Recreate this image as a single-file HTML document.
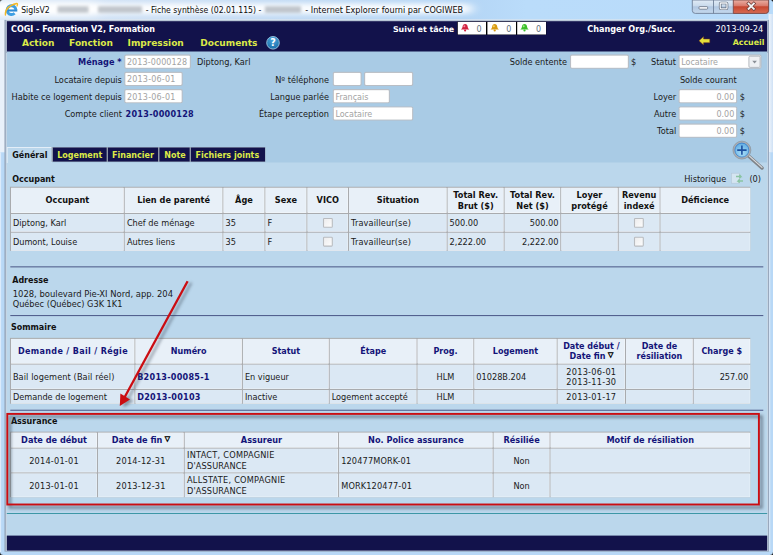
<!DOCTYPE html>
<html lang="fr">
<head>
<meta charset="utf-8">
<title>SigIsV2 - Fiche synthèse (02.01.115) - Internet Explorer fourni par COGIWEB</title>
<style>
html,body{margin:0;padding:0;background:#1b1b1b;width:773px;height:555px;overflow:hidden}
svg{display:block;position:absolute;left:0;top:0}
text{font-family:'DejaVu Sans','Liberation Sans',sans-serif;white-space:pre}
</style>
</head>
<body>
<svg width="773" height="555" viewBox="0 0 773 555">
<defs>
<linearGradient id="tb" x1="0" y1="0" x2="1" y2="0">
<stop offset="0" stop-color="#dbe8f7"/><stop offset="0.3" stop-color="#c6dcf4"/><stop offset="0.6" stop-color="#b4d5f5"/><stop offset="0.68" stop-color="#badcfa"/><stop offset="1" stop-color="#b8dbfa"/>
</linearGradient>
<linearGradient id="tbv" x1="0" y1="0" x2="0" y2="1">
<stop offset="0" stop-color="#ffffff" stop-opacity="0.55"/><stop offset="0.5" stop-color="#ffffff" stop-opacity="0.1"/><stop offset="1" stop-color="#ffffff" stop-opacity="0"/>
</linearGradient>
<linearGradient id="fl" x1="0" y1="0" x2="1" y2="0">
<stop offset="0" stop-color="#c9dcf0"/><stop offset="1" stop-color="#e3edf8"/>
</linearGradient>
<linearGradient id="fr" x1="0" y1="0" x2="1" y2="0">
<stop offset="0" stop-color="#f1f6fc"/><stop offset="1" stop-color="#cfe1f5"/>
</linearGradient>
<linearGradient id="btn" x1="0" y1="0" x2="0" y2="1">
<stop offset="0" stop-color="#e1ebf6"/><stop offset="0.45" stop-color="#c9daec"/><stop offset="0.5" stop-color="#b1c7e1"/><stop offset="1" stop-color="#c6d9ee"/>
</linearGradient>
<linearGradient id="cls" x1="0" y1="0" x2="0" y2="1">
<stop offset="0" stop-color="#eab0a4"/><stop offset="0.45" stop-color="#d8786a"/><stop offset="0.5" stop-color="#c6452f"/><stop offset="1" stop-color="#d86c54"/>
</linearGradient>
<linearGradient id="cbg" x1="0" y1="0" x2="1" y2="1">
<stop offset="0" stop-color="#ececed"/><stop offset="1" stop-color="#fdfdfd"/>
</linearGradient>
<radialGradient id="help" cx="0.5" cy="0.25" r="0.8">
<stop offset="0" stop-color="#4aa6dd"/><stop offset="1" stop-color="#176aa6"/>
</radialGradient>
<radialGradient id="lens" cx="0.5" cy="0.7" r="0.7">
<stop offset="0" stop-color="#a6dcf7"/><stop offset="1" stop-color="#5aa9e2"/>
</radialGradient>
<filter id="blur2" x="-20%" y="-50%" width="140%" height="200%"><feGaussianBlur stdDeviation="1.6"/></filter>
<filter id="glow" x="-5%" y="-100%" width="110%" height="300%"><feGaussianBlur stdDeviation="6 2.6"/></filter>
<filter id="sh" x="-10%" y="-10%" width="120%" height="120%"><feGaussianBlur stdDeviation="1.5"/></filter>
</defs>

<rect x="0" y="0" width="773" height="555" rx="3.5" ry="3.5" fill="#b8d8f6"/>
<rect x="0.00" y="0.00" width="773.00" height="21.00" fill="url(#tb)" rx="4"/>
<rect x="0.00" y="8.00" width="773.00" height="13.00" fill="url(#tb)"/>
<g filter="url(#glow)"><rect x="-20" y="3.5" width="492" height="10.5" rx="5" fill="#ffffff" opacity="0.92"/><rect x="-20" y="1" width="120" height="16" rx="5" fill="#ffffff" opacity="0.6"/></g>
<rect x="6.00" y="19.40" width="762.00" height="1.00" fill="#eef4fb"/>
<rect x="0.00" y="20.00" width="5.00" height="132.30" fill="#e9f1fa"/>
<rect x="0.00" y="152.30" width="1.10" height="399.70" fill="#dcebfb"/>
<rect x="768.60" y="14.00" width="4.40" height="138.30" fill="url(#fr)"/>
<rect x="768.60" y="152.30" width="1.80" height="398.70" fill="#d3e5f8"/>
<rect x="4.50" y="19.90" width="764.40" height="531.70" fill="#8d9db2"/>
<rect x="5.70" y="20.30" width="762.40" height="530.70" fill="#c9d6e4"/>
<rect x="6.80" y="21.20" width="760.40" height="31.80" fill="#12124b"/>
<rect x="6.80" y="51.50" width="760.40" height="113.50" fill="#a9cbe5"/>
<rect x="6.80" y="162.50" width="760.40" height="375.50" fill="#bbd7ec"/>
<rect x="6.80" y="535.60" width="760.40" height="15.00" fill="#12124b"/>
<rect x="6.80" y="513.00" width="760.40" height="1.00" fill="#3d97a6"/>
<g><path d="M15.9 9.9 A4.4 4.4 0 1 0 14.6 13.3" fill="none" stroke="#3f9fe3" stroke-width="2.9"/><path d="M7.4 10.5 H17.3" stroke="#2f8ad4" stroke-width="2.1"/><path d="M5.4 15.0 Q4.6 6.4 16.6 3.5 Q18.2 3.6 17.0 6.0" fill="none" stroke="#f2b827" stroke-width="1.3" stroke-linecap="round"/></g>
<text x="21.2" y="12.9" font-size="9.3" font-family="'Liberation Sans','DejaVu Sans',sans-serif" fill="#0c0c0c" textLength="28.6" lengthAdjust="spacingAndGlyphs">SigIsV2</text>
<g filter="url(#blur2)" fill="#858d98" opacity="0.5"><rect x="57.5" y="6.3" width="31" height="6.4"/><rect x="98" y="6.3" width="44" height="6.4"/><rect x="265" y="6.3" width="36" height="6.4"/></g>
<text x="145.7" y="12.9" font-size="9.3" font-family="'Liberation Sans','DejaVu Sans',sans-serif" fill="#0c0c0c" textLength="115.6" lengthAdjust="spacingAndGlyphs">- Fiche synthèse (02.01.115) -</text>
<text x="305.3" y="12.9" font-size="9.3" font-family="'Liberation Sans','DejaVu Sans',sans-serif" fill="#0c0c0c" textLength="157.8" lengthAdjust="spacingAndGlyphs">- Internet Explorer fourni par COGIWEB</text>
<path d="M692.3 0 H768.6 V10.4 Q768.6 13.4 765.6 13.4 H695.3 Q692.3 13.4 692.3 10.4 Z" fill="url(#btn)" stroke="#6f8098" stroke-width="0.9"/>
<path d="M733.3 0 H768.6 V10.4 Q768.6 13.4 765.6 13.4 H733.3 Z" fill="url(#cls)" stroke="#7a4a48" stroke-width="0.9"/>
<line x1="713.5" y1="0" x2="713.5" y2="13.4" stroke="#6f8098" stroke-width="0.9"/>
<rect x="699" y="6.6" width="8.6" height="2.6" rx="0.8" fill="#f7f9fc" stroke="#5a6475" stroke-width="0.7"/>
<rect x="720.2" y="3.0" width="6.8" height="5.8" rx="0.7" fill="none" stroke="#5a6475" stroke-width="2.6"/><rect x="720.2" y="3.0" width="6.8" height="5.8" rx="0.7" fill="none" stroke="#f7f9fc" stroke-width="1.3"/>
<path d="M748.6 3.6 L753.8 8.8 M753.8 3.6 L748.6 8.8" stroke="#6b3a36" stroke-width="3.3" stroke-linecap="square"/><path d="M748.6 3.6 L753.8 8.8 M753.8 3.6 L748.6 8.8" stroke="#f4f4f4" stroke-width="1.9" stroke-linecap="square"/>
<text x="11" y="31.9" font-size="8.03" font-weight="bold" fill="#ffffff">COGI - Formation V2, Formation</text>
<text x="22" y="45.7" font-size="9.03" font-weight="bold" fill="#dcea48">Action</text>
<text x="69.1" y="45.7" font-size="9.03" font-weight="bold" fill="#dcea48">Fonction</text>
<text x="127.6" y="45.7" font-size="9.03" font-weight="bold" fill="#dcea48">Impression</text>
<text x="200.3" y="45.7" font-size="9.03" font-weight="bold" fill="#dcea48">Documents</text>
<circle cx="273" cy="42.8" r="6.3" fill="url(#help)" stroke="#9cc6e2" stroke-width="0.9"/>
<text x="273" y="46.4" font-size="9.6" font-weight="bold" text-anchor="middle" fill="#ffffff">?</text>
<text x="392.9" y="31.8" font-size="7.91" font-weight="bold" fill="#ffffff">Suivi et tâche</text>
<rect x="457.30" y="21.70" width="89.00" height="13.00" fill="#000000"/>
<rect x="457.80" y="21.90" width="28.20" height="12.60" fill="#ffffff"/>
<path d="M460.9 29.6 Q462.5 28.6 462.6 26.6 Q462.8 23.9 465.1 23.9 Q467.4 23.9 467.6 26.6 Q467.7 28.6 469.3 29.6 Z" fill="#d2213f"/><circle cx="465.1" cy="30.5" r="1.1" fill="#d2213f"/><circle cx="464.3" cy="26.2" r="1" fill="#f08aa0"/>
<text x="479.1" y="31.5" font-size="8.0" text-anchor="middle" fill="#5f6f80">0</text>
<rect x="487.40" y="21.90" width="28.60" height="12.60" fill="#ffffff"/>
<path d="M490.5 29.6 Q492.1 28.6 492.2 26.6 Q492.4 23.9 494.7 23.9 Q497.0 23.9 497.2 26.6 Q497.3 28.6 498.9 29.6 Z" fill="#d89a12"/><circle cx="494.7" cy="30.5" r="1.1" fill="#d89a12"/><circle cx="493.9" cy="26.2" r="1" fill="#f5d060"/>
<text x="508.7" y="31.5" font-size="8.0" text-anchor="middle" fill="#5f6f80">0</text>
<rect x="517.20" y="21.90" width="28.80" height="12.60" fill="#ffffff"/>
<path d="M520.3 29.6 Q521.9 28.6 522.0 26.6 Q522.2 23.9 524.5 23.9 Q526.8 23.9 527.0 26.6 Q527.1 28.6 528.7 29.6 Z" fill="#3bbf2a"/><circle cx="524.5" cy="30.5" r="1.1" fill="#3bbf2a"/><circle cx="523.7" cy="26.2" r="1" fill="#9be88a"/>
<text x="538.5" y="31.5" font-size="8.0" text-anchor="middle" fill="#5f6f80">0</text>
<text x="587.2" y="31.7" font-size="8.12" font-weight="bold" fill="#ffffff">Changer Org./Succ.</text>
<text x="763.3" y="31.8" font-size="8.24" text-anchor="end" fill="#ffffff">2013-09-24</text>
<path d="M698.9 40.8 L703.6 36.6 V38.9 H709.8 V42.7 H703.6 V45 Z" fill="#e6e23a" stroke="#6a2a20" stroke-width="0.5"/>
<text x="764.5" y="44.5" font-size="7.9" font-weight="bold" text-anchor="end" fill="#dcea48">Accueil</text>
<text x="121.6" y="65.3" font-size="8.2" font-weight="bold" text-anchor="end" fill="#141478">Ménage *</text>
<text x="121.9" y="82.6" font-size="8.2" text-anchor="end" fill="#1a1a1a">Locataire depuis</text>
<text x="121.9" y="100" font-size="8.2" text-anchor="end" fill="#1a1a1a">Habite ce logement depuis</text>
<text x="121.9" y="117.2" font-size="8.2" text-anchor="end" fill="#1a1a1a">Compte client</text>
<rect x="124.30" y="54.60" width="66.60" height="14.20" rx="1.7" fill="#b9bec5"/>
<rect x="125.20" y="55.50" width="64.60" height="12.20" rx="0.9" fill="#c9cdd2"/>
<rect x="125.40" y="55.70" width="64.40" height="12.00" rx="0.8" fill="#ffffff"/>
<text x="126.9" y="65.1" font-size="8.0" fill="#a3a3a3" letter-spacing="0.12">2013-0000128</text>
<rect x="124.30" y="71.80" width="58.40" height="14.20" rx="1.7" fill="#b9bec5"/>
<rect x="125.20" y="72.70" width="56.40" height="12.20" rx="0.9" fill="#c9cdd2"/>
<rect x="125.40" y="72.90" width="56.20" height="12.00" rx="0.8" fill="#ffffff"/>
<text x="126.9" y="82.3" font-size="8.0" fill="#a3a3a3" letter-spacing="0.22">2013-06-01</text>
<rect x="124.30" y="89.10" width="58.40" height="14.20" rx="1.7" fill="#b9bec5"/>
<rect x="125.20" y="90.00" width="56.40" height="12.20" rx="0.9" fill="#c9cdd2"/>
<rect x="125.40" y="90.20" width="56.20" height="12.00" rx="0.8" fill="#ffffff"/>
<text x="126.9" y="99.6" font-size="8.0" fill="#a3a3a3" letter-spacing="0.22">2013-06-01</text>
<text x="197" y="65.3" font-size="8.2" fill="#1a1a1a">Diptong, Karl</text>
<text x="125.6" y="117.3" font-size="8.1" font-weight="bold" fill="#141478" textLength="68.1" lengthAdjust="spacing">2013-0000128</text>
<text x="329" y="82.5" font-size="8.2" text-anchor="end" fill="#1a1a1a">Nº téléphone</text>
<text x="329" y="99.8" font-size="8.2" text-anchor="end" fill="#1a1a1a">Langue parlée</text>
<text x="329" y="117.3" font-size="8.2" text-anchor="end" fill="#1a1a1a">Étape perception</text>
<rect x="332.80" y="71.80" width="28.80" height="14.20" rx="1.7" fill="#b9bec5"/>
<rect x="333.70" y="72.70" width="26.80" height="12.20" rx="0.9" fill="#c9cdd2"/>
<rect x="333.90" y="72.90" width="26.60" height="12.00" rx="0.8" fill="#ffffff"/>
<rect x="364.10" y="71.80" width="49.10" height="14.20" rx="1.7" fill="#b9bec5"/>
<rect x="365.00" y="72.70" width="47.10" height="12.20" rx="0.9" fill="#c9cdd2"/>
<rect x="365.20" y="72.90" width="46.90" height="12.00" rx="0.8" fill="#ffffff"/>
<rect x="332.80" y="89.10" width="57.10" height="14.20" rx="1.7" fill="#b9bec5"/>
<rect x="333.70" y="90.00" width="55.10" height="12.20" rx="0.9" fill="#c9cdd2"/>
<rect x="333.90" y="90.20" width="54.90" height="12.00" rx="0.8" fill="#ffffff"/>
<text x="335.4" y="99.6" font-size="8.0" fill="#a3a3a3">Français</text>
<rect x="332.80" y="106.40" width="80.40" height="14.20" rx="1.7" fill="#b9bec5"/>
<rect x="333.70" y="107.30" width="78.40" height="12.20" rx="0.9" fill="#c9cdd2"/>
<rect x="333.90" y="107.50" width="78.20" height="12.00" rx="0.8" fill="#ffffff"/>
<text x="335.4" y="116.9" font-size="8.0" fill="#a3a3a3">Locataire</text>
<text x="567" y="65.3" font-size="8.2" text-anchor="end" fill="#1a1a1a">Solde entente</text>
<rect x="570.00" y="54.60" width="58.90" height="14.20" rx="1.7" fill="#b9bec5"/>
<rect x="570.90" y="55.50" width="56.90" height="12.20" rx="0.9" fill="#c9cdd2"/>
<rect x="571.10" y="55.70" width="56.70" height="12.00" rx="0.8" fill="#ffffff"/>
<text x="631" y="65.3" font-size="8.2" fill="#1a1a1a">$</text>
<text x="676" y="65.3" font-size="8.2" text-anchor="end" fill="#1a1a1a">Statut</text>
<rect x="678.60" y="54.60" width="82.90" height="14.20" rx="1.7" fill="#b9bec5"/>
<rect x="679.50" y="55.50" width="80.90" height="12.20" rx="0.9" fill="#c9cdd2"/>
<rect x="679.70" y="55.70" width="80.70" height="12.00" rx="0.8" fill="#ffffff"/>
<text x="681.2" y="65.1" font-size="8.0" fill="#a3a3a3">Locataire</text>
<rect x="748.9" y="56.2" width="11.2" height="11.2" rx="1.2" fill="#eef0f3" stroke="#aeb3ba" stroke-width="0.9"/><path d="M752.3 60.7 H756.9 L754.6 63.5 Z" fill="#8b8f96"/>
<text x="679.9" y="82.6" font-size="8.2" fill="#1a1a1a">Solde courant</text>
<text x="676.2" y="100.1" font-size="8.2" text-anchor="end" fill="#1a1a1a">Loyer</text>
<rect x="678.60" y="89.10" width="58.60" height="14.20" rx="1.7" fill="#b9bec5"/>
<rect x="679.50" y="90.00" width="56.60" height="12.20" rx="0.9" fill="#c9cdd2"/>
<rect x="679.70" y="90.20" width="56.40" height="12.00" rx="0.8" fill="#ffffff"/>
<text x="734.3" y="99.6" font-size="8.0" text-anchor="end" fill="#a3a3a3">0.00</text>
<text x="739.8" y="100.1" font-size="8.2" fill="#1a1a1a">$</text>
<text x="676.2" y="117.4" font-size="8.2" text-anchor="end" fill="#1a1a1a">Autre</text>
<rect x="678.60" y="106.40" width="58.60" height="14.20" rx="1.7" fill="#b9bec5"/>
<rect x="679.50" y="107.30" width="56.60" height="12.20" rx="0.9" fill="#c9cdd2"/>
<rect x="679.70" y="107.50" width="56.40" height="12.00" rx="0.8" fill="#ffffff"/>
<text x="734.3" y="116.9" font-size="8.0" text-anchor="end" fill="#a3a3a3">0.00</text>
<text x="739.8" y="117.4" font-size="8.2" fill="#1a1a1a">$</text>
<text x="676.2" y="134.2" font-size="8.2" text-anchor="end" fill="#1a1a1a">Total</text>
<rect x="678.60" y="123.60" width="58.60" height="14.20" rx="1.7" fill="#b9bec5"/>
<rect x="679.50" y="124.50" width="56.60" height="12.20" rx="0.9" fill="#c9cdd2"/>
<rect x="679.70" y="124.70" width="56.40" height="12.00" rx="0.8" fill="#ffffff"/>
<text x="734.3" y="134.1" font-size="8.0" text-anchor="end" fill="#a3a3a3">0.00</text>
<text x="739.8" y="134.2" font-size="8.2" fill="#1a1a1a">$</text>
<g><line x1="748.6" y1="156" x2="762" y2="168" stroke="#7f8388" stroke-width="3.5" stroke-linecap="round"/><line x1="748.9" y1="155.6" x2="762" y2="167.4" stroke="#d9dbde" stroke-width="1.2" stroke-linecap="round"/><circle cx="741.9" cy="150.1" r="8.1" fill="url(#lens)" stroke="#a9adb3" stroke-width="1.7"/><circle cx="741.9" cy="150.1" r="9" fill="none" stroke="#7d8288" stroke-width="0.5"/><circle cx="741.9" cy="150.1" r="7" fill="none" stroke="#2f6fc0" stroke-width="0.8" opacity="0.8"/><path d="M737.2 150.1 H746.6 M741.9 145.4 V154.8" stroke="#1d50a0" stroke-width="1.6"/></g>
<rect x="6.80" y="147.00" width="45.00" height="16.00" fill="#e3eef8"/>
<rect x="7.70" y="148.00" width="44.10" height="15.00" fill="#bbd7ec"/>
<rect x="51.60" y="147.20" width="213.80" height="14.60" fill="#8e98a8"/>
<rect x="53.00" y="147.60" width="53.60" height="13.90" fill="#12124b"/>
<rect x="108.00" y="147.60" width="50.00" height="13.90" fill="#12124b"/>
<rect x="159.50" y="147.60" width="30.10" height="13.90" fill="#12124b"/>
<rect x="191.00" y="147.60" width="74.00" height="13.90" fill="#12124b"/>
<text x="12.2" y="157.5" font-size="8.0" font-weight="bold" fill="#111111">Général</text>
<text x="57.2" y="157.5" font-size="8.0" font-weight="bold" fill="#dcea48">Logement</text>
<text x="112" y="157.5" font-size="8.0" font-weight="bold" fill="#dcea48">Financier</text>
<text x="164.3" y="157.5" font-size="8.0" font-weight="bold" fill="#dcea48">Note</text>
<text x="195.6" y="157.5" font-size="8.0" font-weight="bold" fill="#dcea48">Fichiers joints</text>
<text x="12.2" y="181.6" font-size="8.0" font-weight="bold" fill="#111111">Occupant</text>
<text x="726.2" y="181.5" font-size="8.2" text-anchor="end" fill="#1a1a1a">Historique</text>
<g opacity="0.45"><rect x="731.5" y="173.2" width="8" height="10" fill="#f4f6f8" stroke="#aab3bd" stroke-width="0.6"/><path d="M736 176.5 h5 l-1.6 -1.8 m1.6 1.8 l-1.6 1.8 M743 181 h-5 l1.6 -1.8 m-1.6 1.8 l1.6 1.8" stroke="#4fae4a" stroke-width="1.3" fill="none"/></g>
<text x="761" y="181.5" font-size="8.2" text-anchor="end" fill="#1a1a1a">(0)</text>
<rect x="9.95" y="186.75" width="740.35" height="64.05" fill="#a9abae"/>
<rect x="11.05" y="187.85" width="112.70" height="25.10" fill="#f7fafd"/>
<rect x="11.05" y="187.85" width="112.10" height="24.50" fill="#e8f0f8"/>
<rect x="124.85" y="187.85" width="97.60" height="25.10" fill="#f7fafd"/>
<rect x="124.85" y="187.85" width="97.00" height="24.50" fill="#e8f0f8"/>
<rect x="223.55" y="187.85" width="40.90" height="25.10" fill="#f7fafd"/>
<rect x="223.55" y="187.85" width="40.30" height="24.50" fill="#e8f0f8"/>
<rect x="265.55" y="187.85" width="40.90" height="25.10" fill="#f7fafd"/>
<rect x="265.55" y="187.85" width="40.30" height="24.50" fill="#e8f0f8"/>
<rect x="307.55" y="187.85" width="40.40" height="25.10" fill="#f7fafd"/>
<rect x="307.55" y="187.85" width="39.80" height="24.50" fill="#e8f0f8"/>
<rect x="349.05" y="187.85" width="97.60" height="25.10" fill="#f7fafd"/>
<rect x="349.05" y="187.85" width="97.00" height="24.50" fill="#e8f0f8"/>
<rect x="447.75" y="187.85" width="55.90" height="25.10" fill="#f7fafd"/>
<rect x="447.75" y="187.85" width="55.30" height="24.50" fill="#e8f0f8"/>
<rect x="504.75" y="187.85" width="55.50" height="25.10" fill="#f7fafd"/>
<rect x="504.75" y="187.85" width="54.90" height="24.50" fill="#e8f0f8"/>
<rect x="561.35" y="187.85" width="56.40" height="25.10" fill="#f7fafd"/>
<rect x="561.35" y="187.85" width="55.80" height="24.50" fill="#e8f0f8"/>
<rect x="618.85" y="187.85" width="40.70" height="25.10" fill="#f7fafd"/>
<rect x="618.85" y="187.85" width="40.10" height="24.50" fill="#e8f0f8"/>
<rect x="660.65" y="187.85" width="89.65" height="25.10" fill="#f7fafd"/>
<rect x="660.65" y="187.85" width="89.05" height="24.50" fill="#e8f0f8"/>
<rect x="11.05" y="214.05" width="112.70" height="17.70" fill="#eef4fa"/>
<rect x="11.05" y="214.05" width="112.10" height="17.10" fill="#dbe8f4"/>
<rect x="124.85" y="214.05" width="97.60" height="17.70" fill="#eef4fa"/>
<rect x="124.85" y="214.05" width="97.00" height="17.10" fill="#dbe8f4"/>
<rect x="223.55" y="214.05" width="40.90" height="17.70" fill="#eef4fa"/>
<rect x="223.55" y="214.05" width="40.30" height="17.10" fill="#dbe8f4"/>
<rect x="265.55" y="214.05" width="40.90" height="17.70" fill="#eef4fa"/>
<rect x="265.55" y="214.05" width="40.30" height="17.10" fill="#dbe8f4"/>
<rect x="307.55" y="214.05" width="40.40" height="17.70" fill="#eef4fa"/>
<rect x="307.55" y="214.05" width="39.80" height="17.10" fill="#dbe8f4"/>
<rect x="349.05" y="214.05" width="97.60" height="17.70" fill="#eef4fa"/>
<rect x="349.05" y="214.05" width="97.00" height="17.10" fill="#dbe8f4"/>
<rect x="447.75" y="214.05" width="55.90" height="17.70" fill="#eef4fa"/>
<rect x="447.75" y="214.05" width="55.30" height="17.10" fill="#dbe8f4"/>
<rect x="504.75" y="214.05" width="55.50" height="17.70" fill="#eef4fa"/>
<rect x="504.75" y="214.05" width="54.90" height="17.10" fill="#dbe8f4"/>
<rect x="561.35" y="214.05" width="56.40" height="17.70" fill="#eef4fa"/>
<rect x="561.35" y="214.05" width="55.80" height="17.10" fill="#dbe8f4"/>
<rect x="618.85" y="214.05" width="40.70" height="17.70" fill="#eef4fa"/>
<rect x="618.85" y="214.05" width="40.10" height="17.10" fill="#dbe8f4"/>
<rect x="660.65" y="214.05" width="89.65" height="17.70" fill="#eef4fa"/>
<rect x="660.65" y="214.05" width="89.05" height="17.10" fill="#dbe8f4"/>
<rect x="11.05" y="232.85" width="112.70" height="17.95" fill="#eef4fa"/>
<rect x="11.05" y="232.85" width="112.10" height="17.35" fill="#dbe8f4"/>
<rect x="124.85" y="232.85" width="97.60" height="17.95" fill="#eef4fa"/>
<rect x="124.85" y="232.85" width="97.00" height="17.35" fill="#dbe8f4"/>
<rect x="223.55" y="232.85" width="40.90" height="17.95" fill="#eef4fa"/>
<rect x="223.55" y="232.85" width="40.30" height="17.35" fill="#dbe8f4"/>
<rect x="265.55" y="232.85" width="40.90" height="17.95" fill="#eef4fa"/>
<rect x="265.55" y="232.85" width="40.30" height="17.35" fill="#dbe8f4"/>
<rect x="307.55" y="232.85" width="40.40" height="17.95" fill="#eef4fa"/>
<rect x="307.55" y="232.85" width="39.80" height="17.35" fill="#dbe8f4"/>
<rect x="349.05" y="232.85" width="97.60" height="17.95" fill="#eef4fa"/>
<rect x="349.05" y="232.85" width="97.00" height="17.35" fill="#dbe8f4"/>
<rect x="447.75" y="232.85" width="55.90" height="17.95" fill="#eef4fa"/>
<rect x="447.75" y="232.85" width="55.30" height="17.35" fill="#dbe8f4"/>
<rect x="504.75" y="232.85" width="55.50" height="17.95" fill="#eef4fa"/>
<rect x="504.75" y="232.85" width="54.90" height="17.35" fill="#dbe8f4"/>
<rect x="561.35" y="232.85" width="56.40" height="17.95" fill="#eef4fa"/>
<rect x="561.35" y="232.85" width="55.80" height="17.35" fill="#dbe8f4"/>
<rect x="618.85" y="232.85" width="40.70" height="17.95" fill="#eef4fa"/>
<rect x="618.85" y="232.85" width="40.10" height="17.35" fill="#dbe8f4"/>
<rect x="660.65" y="232.85" width="89.65" height="17.95" fill="#eef4fa"/>
<rect x="660.65" y="232.85" width="89.05" height="17.35" fill="#dbe8f4"/>
<text x="67.4" y="203.4" font-size="8.2" font-weight="bold" text-anchor="middle" fill="#111111">Occupant</text>
<text x="173.7" y="203.4" font-size="8.2" font-weight="bold" text-anchor="middle" fill="#111111">Lien de parenté</text>
<text x="244.0" y="203.4" font-size="8.2" font-weight="bold" text-anchor="middle" fill="#111111">Âge</text>
<text x="286.0" y="203.4" font-size="8.2" font-weight="bold" text-anchor="middle" fill="#111111">Sexe</text>
<text x="327.8" y="203.4" font-size="8.2" font-weight="bold" text-anchor="middle" fill="#111111">VICO</text>
<text x="397.9" y="203.4" font-size="8.2" font-weight="bold" text-anchor="middle" fill="#111111">Situation</text>
<text x="475.7" y="198.2" font-size="8.2" font-weight="bold" text-anchor="middle" fill="#111111">Total Rev.</text>
<text x="475.7" y="208.6" font-size="8.2" font-weight="bold" text-anchor="middle" fill="#111111">Brut ($)</text>
<text x="532.5" y="198.2" font-size="8.2" font-weight="bold" text-anchor="middle" fill="#111111">Total Rev.</text>
<text x="532.5" y="208.6" font-size="8.2" font-weight="bold" text-anchor="middle" fill="#111111">Net ($)</text>
<text x="589.5" y="198.2" font-size="8.2" font-weight="bold" text-anchor="middle" fill="#111111">Loyer</text>
<text x="589.5" y="208.6" font-size="8.2" font-weight="bold" text-anchor="middle" fill="#111111">protégé</text>
<text x="639.2" y="198.2" font-size="8.2" font-weight="bold" text-anchor="middle" fill="#111111">Revenu</text>
<text x="639.2" y="208.6" font-size="8.2" font-weight="bold" text-anchor="middle" fill="#111111">indexé</text>
<text x="705.2" y="203.4" font-size="8.2" font-weight="bold" text-anchor="middle" fill="#111111">Déficience</text>
<text x="12.9" y="226.3" font-size="8.2" fill="#1a1a1a">Diptong, Karl</text>
<text x="126.9" y="226.3" font-size="8.2" fill="#1a1a1a">Chef de ménage</text>
<text x="225.5" y="226.3" font-size="8.2" fill="#1a1a1a">35</text>
<text x="267.5" y="226.3" font-size="8.2" fill="#1a1a1a">F</text>
<rect x="323.50" y="218.50" width="8.80" height="8.80" rx="0.8" fill="url(#cbg)" stroke="#b9bcc0" stroke-width="1.1"/>
<text x="351" y="226.3" font-size="8.2" fill="#1a1a1a" letter-spacing="0.12">Travailleur(se)</text>
<text x="449.6" y="226.3" font-size="8.2" fill="#1a1a1a">500.00</text>
<text x="558.5" y="226.3" font-size="8.2" text-anchor="end" fill="#1a1a1a">500.00</text>
<rect x="634.50" y="218.50" width="8.80" height="8.80" rx="0.8" fill="url(#cbg)" stroke="#b9bcc0" stroke-width="1.1"/>
<text x="12.9" y="245.0" font-size="8.2" fill="#1a1a1a">Dumont, Louise</text>
<text x="126.9" y="245.0" font-size="8.2" fill="#1a1a1a">Autres liens</text>
<text x="225.5" y="245.0" font-size="8.2" fill="#1a1a1a">35</text>
<text x="267.5" y="245.0" font-size="8.2" fill="#1a1a1a">F</text>
<rect x="323.50" y="237.30" width="8.80" height="8.80" rx="0.8" fill="url(#cbg)" stroke="#b9bcc0" stroke-width="1.1"/>
<text x="351" y="245.0" font-size="8.2" fill="#1a1a1a" letter-spacing="0.12">Travailleur(se)</text>
<text x="449.6" y="245.0" font-size="8.2" fill="#1a1a1a">2,222.00</text>
<text x="558.5" y="245.0" font-size="8.2" text-anchor="end" fill="#1a1a1a">2,222.00</text>
<rect x="634.50" y="237.30" width="8.80" height="8.80" rx="0.8" fill="url(#cbg)" stroke="#b9bcc0" stroke-width="1.1"/>
<rect x="10.30" y="266.30" width="753.00" height="1.10" fill="#53618f"/>
<text x="12.2" y="282.9" font-size="8.0" font-weight="bold" fill="#111111">Adresse</text>
<text x="12.7" y="297.1" font-size="8.43" fill="#1a1a1a">1028, boulevard Pie-XI Nord, app. 204</text>
<text x="12.7" y="306.7" font-size="8.2" fill="#1a1a1a">Québec (Québec) G3K 1K1</text>
<rect x="10.30" y="315.00" width="753.00" height="1.10" fill="#53618f"/>
<text x="10.9" y="329.7" font-size="8.0" font-weight="bold" fill="#111111">Sommaire</text>
<rect x="9.95" y="337.85" width="740.35" height="65.85" fill="#a9abae"/>
<rect x="11.05" y="338.95" width="123.40" height="24.70" fill="#f7fafd"/>
<rect x="11.05" y="338.95" width="122.80" height="24.10" fill="#e8f0f8"/>
<rect x="135.55" y="338.95" width="106.30" height="24.70" fill="#f7fafd"/>
<rect x="135.55" y="338.95" width="105.70" height="24.10" fill="#e8f0f8"/>
<rect x="242.95" y="338.95" width="85.80" height="24.70" fill="#f7fafd"/>
<rect x="242.95" y="338.95" width="85.20" height="24.10" fill="#e8f0f8"/>
<rect x="329.85" y="338.95" width="86.70" height="24.70" fill="#f7fafd"/>
<rect x="329.85" y="338.95" width="86.10" height="24.10" fill="#e8f0f8"/>
<rect x="417.65" y="338.95" width="55.70" height="24.70" fill="#f7fafd"/>
<rect x="417.65" y="338.95" width="55.10" height="24.10" fill="#e8f0f8"/>
<rect x="474.45" y="338.95" width="82.20" height="24.70" fill="#f7fafd"/>
<rect x="474.45" y="338.95" width="81.60" height="24.10" fill="#e8f0f8"/>
<rect x="557.75" y="338.95" width="67.20" height="24.70" fill="#f7fafd"/>
<rect x="557.75" y="338.95" width="66.60" height="24.10" fill="#e8f0f8"/>
<rect x="626.05" y="338.95" width="66.70" height="24.70" fill="#f7fafd"/>
<rect x="626.05" y="338.95" width="66.10" height="24.10" fill="#e8f0f8"/>
<rect x="693.85" y="338.95" width="56.45" height="24.70" fill="#f7fafd"/>
<rect x="693.85" y="338.95" width="55.85" height="24.10" fill="#e8f0f8"/>
<rect x="11.05" y="364.75" width="123.40" height="24.20" fill="#eef4fa"/>
<rect x="11.05" y="364.75" width="122.80" height="23.60" fill="#dbe8f4"/>
<rect x="135.55" y="364.75" width="106.30" height="24.20" fill="#eef4fa"/>
<rect x="135.55" y="364.75" width="105.70" height="23.60" fill="#dbe8f4"/>
<rect x="242.95" y="364.75" width="85.80" height="24.20" fill="#eef4fa"/>
<rect x="242.95" y="364.75" width="85.20" height="23.60" fill="#dbe8f4"/>
<rect x="329.85" y="364.75" width="86.70" height="24.20" fill="#eef4fa"/>
<rect x="329.85" y="364.75" width="86.10" height="23.60" fill="#dbe8f4"/>
<rect x="417.65" y="364.75" width="55.70" height="24.20" fill="#eef4fa"/>
<rect x="417.65" y="364.75" width="55.10" height="23.60" fill="#dbe8f4"/>
<rect x="474.45" y="364.75" width="82.20" height="24.20" fill="#eef4fa"/>
<rect x="474.45" y="364.75" width="81.60" height="23.60" fill="#dbe8f4"/>
<rect x="557.75" y="364.75" width="67.20" height="24.20" fill="#eef4fa"/>
<rect x="557.75" y="364.75" width="66.60" height="23.60" fill="#dbe8f4"/>
<rect x="626.05" y="364.75" width="66.70" height="24.20" fill="#eef4fa"/>
<rect x="626.05" y="364.75" width="66.10" height="23.60" fill="#dbe8f4"/>
<rect x="693.85" y="364.75" width="56.45" height="24.20" fill="#eef4fa"/>
<rect x="693.85" y="364.75" width="55.85" height="23.60" fill="#dbe8f4"/>
<rect x="11.05" y="390.05" width="123.40" height="13.65" fill="#eef4fa"/>
<rect x="11.05" y="390.05" width="122.80" height="13.05" fill="#dbe8f4"/>
<rect x="135.55" y="390.05" width="106.30" height="13.65" fill="#eef4fa"/>
<rect x="135.55" y="390.05" width="105.70" height="13.05" fill="#dbe8f4"/>
<rect x="242.95" y="390.05" width="85.80" height="13.65" fill="#eef4fa"/>
<rect x="242.95" y="390.05" width="85.20" height="13.05" fill="#dbe8f4"/>
<rect x="329.85" y="390.05" width="86.70" height="13.65" fill="#eef4fa"/>
<rect x="329.85" y="390.05" width="86.10" height="13.05" fill="#dbe8f4"/>
<rect x="417.65" y="390.05" width="55.70" height="13.65" fill="#eef4fa"/>
<rect x="417.65" y="390.05" width="55.10" height="13.05" fill="#dbe8f4"/>
<rect x="474.45" y="390.05" width="82.20" height="13.65" fill="#eef4fa"/>
<rect x="474.45" y="390.05" width="81.60" height="13.05" fill="#dbe8f4"/>
<rect x="557.75" y="390.05" width="67.20" height="13.65" fill="#eef4fa"/>
<rect x="557.75" y="390.05" width="66.60" height="13.05" fill="#dbe8f4"/>
<rect x="626.05" y="390.05" width="66.70" height="13.65" fill="#eef4fa"/>
<rect x="626.05" y="390.05" width="66.10" height="13.05" fill="#dbe8f4"/>
<rect x="693.85" y="390.05" width="56.45" height="13.65" fill="#eef4fa"/>
<rect x="693.85" y="390.05" width="55.85" height="13.05" fill="#dbe8f4"/>
<text x="72.8" y="353.9" font-size="8.05" font-weight="bold" text-anchor="middle" fill="#141478" textLength="109.7" lengthAdjust="spacing">Demande / Bail / Régie</text>
<text x="188.7" y="353.9" font-size="8.05" font-weight="bold" text-anchor="middle" fill="#141478">Numéro</text>
<text x="285.9" y="353.9" font-size="8.05" font-weight="bold" text-anchor="middle" fill="#141478">Statut</text>
<text x="373.2" y="353.9" font-size="8.05" font-weight="bold" text-anchor="middle" fill="#141478">Étape</text>
<text x="445.5" y="353.9" font-size="8.05" font-weight="bold" text-anchor="middle" fill="#141478">Prog.</text>
<text x="515.5" y="353.9" font-size="8.05" font-weight="bold" text-anchor="middle" fill="#141478">Logement</text>
<text x="591.4" y="348.9" font-size="8.05" font-weight="bold" text-anchor="middle" fill="#141478">Date début /</text>
<text x="591.4" y="358.9" font-size="8.05" font-weight="bold" text-anchor="middle" fill="#141478">Date fin<tspan dx="2.4" dy="-1.9" font-size="6.9" font-weight="normal" fill="#111111" stroke="#111111" stroke-width="0.55">▽</tspan></text>
<text x="659.4" y="348.9" font-size="8.05" font-weight="bold" text-anchor="middle" fill="#141478">Date de</text>
<text x="659.4" y="358.9" font-size="8.05" font-weight="bold" text-anchor="middle" fill="#141478">résiliation</text>
<text x="721.8" y="353.9" font-size="8.05" font-weight="bold" text-anchor="middle" fill="#141478">Charge $</text>
<text x="12.9" y="380.1" font-size="8.2" fill="#1a1a1a" letter-spacing="0.1">Bail logement (Bail réel)</text>
<text x="137.2" y="380.1" font-size="8.1" font-weight="bold" fill="#141478" textLength="72.3" lengthAdjust="spacing">B2013-00085-1</text>
<text x="244.9" y="380.1" font-size="8.2" fill="#1a1a1a">En vigueur</text>
<text x="445.5" y="380.1" font-size="8.2" text-anchor="middle" fill="#1a1a1a">HLM</text>
<text x="476.3" y="380.1" font-size="8.2" fill="#1a1a1a">01028B.204</text>
<text x="591.3" y="374.9" font-size="8.2" text-anchor="middle" fill="#1a1a1a" letter-spacing="0.25">2013-06-01</text>
<text x="591.3" y="385.3" font-size="8.2" text-anchor="middle" fill="#1a1a1a" letter-spacing="0.25">2013-11-30</text>
<text x="748.3" y="380.1" font-size="8.2" text-anchor="end" fill="#1a1a1a">257.00</text>
<text x="12.9" y="399.8" font-size="8.2" fill="#1a1a1a">Demande de logement</text>
<text x="137.2" y="399.8" font-size="8.1" font-weight="bold" fill="#141478" textLength="63.2" lengthAdjust="spacing">D2013-00103</text>
<text x="244.9" y="399.8" font-size="8.2" fill="#1a1a1a">Inactive</text>
<text x="331.7" y="399.8" font-size="8.2" fill="#1a1a1a">Logement accepté</text>
<text x="445.5" y="399.8" font-size="8.2" text-anchor="middle" fill="#1a1a1a">HLM</text>
<text x="591.3" y="399.8" font-size="8.2" text-anchor="middle" fill="#1a1a1a" letter-spacing="0.25">2013-01-17</text>
<rect x="10.30" y="409.70" width="753.00" height="1.10" fill="#53618f"/>
<text x="10.9" y="423.9" font-size="8.0" font-weight="bold" fill="#111111">Assurance</text>
<rect x="9.95" y="431.65" width="740.35" height="65.55" fill="#a9abae"/>
<rect x="11.05" y="432.75" width="85.90" height="14.90" fill="#f7fafd"/>
<rect x="11.05" y="432.75" width="85.30" height="14.30" fill="#e8f0f8"/>
<rect x="98.05" y="432.75" width="85.70" height="14.90" fill="#f7fafd"/>
<rect x="98.05" y="432.75" width="85.10" height="14.30" fill="#e8f0f8"/>
<rect x="184.85" y="432.75" width="153.20" height="14.90" fill="#f7fafd"/>
<rect x="184.85" y="432.75" width="152.60" height="14.30" fill="#e8f0f8"/>
<rect x="339.15" y="432.75" width="153.50" height="14.90" fill="#f7fafd"/>
<rect x="339.15" y="432.75" width="152.90" height="14.30" fill="#e8f0f8"/>
<rect x="493.75" y="432.75" width="55.80" height="14.90" fill="#f7fafd"/>
<rect x="493.75" y="432.75" width="55.20" height="14.30" fill="#e8f0f8"/>
<rect x="550.65" y="432.75" width="199.65" height="14.90" fill="#f7fafd"/>
<rect x="550.65" y="432.75" width="199.05" height="14.30" fill="#e8f0f8"/>
<rect x="11.05" y="448.75" width="85.90" height="23.70" fill="#eef4fa"/>
<rect x="11.05" y="448.75" width="85.30" height="23.10" fill="#dbe8f4"/>
<rect x="98.05" y="448.75" width="85.70" height="23.70" fill="#eef4fa"/>
<rect x="98.05" y="448.75" width="85.10" height="23.10" fill="#dbe8f4"/>
<rect x="184.85" y="448.75" width="153.20" height="23.70" fill="#eef4fa"/>
<rect x="184.85" y="448.75" width="152.60" height="23.10" fill="#dbe8f4"/>
<rect x="339.15" y="448.75" width="153.50" height="23.70" fill="#eef4fa"/>
<rect x="339.15" y="448.75" width="152.90" height="23.10" fill="#dbe8f4"/>
<rect x="493.75" y="448.75" width="55.80" height="23.70" fill="#eef4fa"/>
<rect x="493.75" y="448.75" width="55.20" height="23.10" fill="#dbe8f4"/>
<rect x="550.65" y="448.75" width="199.65" height="23.70" fill="#eef4fa"/>
<rect x="550.65" y="448.75" width="199.05" height="23.10" fill="#dbe8f4"/>
<rect x="11.05" y="473.55" width="85.90" height="23.65" fill="#eef4fa"/>
<rect x="11.05" y="473.55" width="85.30" height="23.05" fill="#dbe8f4"/>
<rect x="98.05" y="473.55" width="85.70" height="23.65" fill="#eef4fa"/>
<rect x="98.05" y="473.55" width="85.10" height="23.05" fill="#dbe8f4"/>
<rect x="184.85" y="473.55" width="153.20" height="23.65" fill="#eef4fa"/>
<rect x="184.85" y="473.55" width="152.60" height="23.05" fill="#dbe8f4"/>
<rect x="339.15" y="473.55" width="153.50" height="23.65" fill="#eef4fa"/>
<rect x="339.15" y="473.55" width="152.90" height="23.05" fill="#dbe8f4"/>
<rect x="493.75" y="473.55" width="55.80" height="23.65" fill="#eef4fa"/>
<rect x="493.75" y="473.55" width="55.20" height="23.05" fill="#dbe8f4"/>
<rect x="550.65" y="473.55" width="199.65" height="23.65" fill="#eef4fa"/>
<rect x="550.65" y="473.55" width="199.05" height="23.05" fill="#dbe8f4"/>
<text x="54.0" y="442.9" font-size="8.18" font-weight="bold" text-anchor="middle" fill="#141478">Date de début</text>
<text x="140.9" y="442.9" font-size="8.18" font-weight="bold" text-anchor="middle" fill="#141478">Date de fin<tspan dx="2.4" dy="-1.9" font-size="6.9" font-weight="normal" fill="#111111" stroke="#111111" stroke-width="0.55">▽</tspan></text>
<text x="261.5" y="442.9" font-size="8.18" font-weight="bold" text-anchor="middle" fill="#141478">Assureur</text>
<text x="415.9" y="442.9" font-size="8.18" font-weight="bold" text-anchor="middle" fill="#141478">No. Police assurance</text>
<text x="521.6" y="442.9" font-size="8.18" font-weight="bold" text-anchor="middle" fill="#141478">Résiliée</text>
<text x="650.2" y="442.9" font-size="8.18" font-weight="bold" text-anchor="middle" fill="#141478">Motif de résiliation</text>
<text x="54" y="463.7" font-size="8.2" text-anchor="middle" fill="#1a1a1a" letter-spacing="0.2">2014-01-01</text>
<text x="140.9" y="463.7" font-size="8.2" text-anchor="middle" fill="#1a1a1a" letter-spacing="0.2">2014-12-31</text>
<text x="187" y="458.1" font-size="8.2" fill="#1a1a1a" letter-spacing="0.25">INTACT, COMPAGNIE</text>
<text x="187" y="468.9" font-size="8.2" fill="#1a1a1a" letter-spacing="0.12">D'ASSURANCE</text>
<text x="341.2" y="463.7" font-size="8.2" fill="#1a1a1a" letter-spacing="0.13">120477MORK-01</text>
<text x="521.6" y="463.7" font-size="8.2" text-anchor="middle" fill="#1a1a1a">Non</text>
<text x="54" y="488.5" font-size="8.2" text-anchor="middle" fill="#1a1a1a" letter-spacing="0.2">2013-01-01</text>
<text x="140.9" y="488.5" font-size="8.2" text-anchor="middle" fill="#1a1a1a" letter-spacing="0.2">2013-12-31</text>
<text x="187" y="482.9" font-size="8.2" fill="#1a1a1a" letter-spacing="0.25">ALLSTATE, COMPAGNIE</text>
<text x="187" y="493.7" font-size="8.2" fill="#1a1a1a" letter-spacing="0.12">D'ASSURANCE</text>
<text x="341.2" y="488.5" font-size="8.2" fill="#1a1a1a" letter-spacing="0.13">MORK120477-01</text>
<text x="521.6" y="488.5" font-size="8.2" text-anchor="middle" fill="#1a1a1a">Non</text>
<g filter="url(#sh)" opacity="0.55"><rect x="9.9" y="416.6" width="751.6" height="90.8" fill="none" stroke="#3a4656" stroke-width="2.8"/></g>
<rect x="7.3" y="413.9" width="751.6" height="90.6" fill="none" stroke="#cb0d12" stroke-width="1.9"/>
<g filter="url(#sh)" opacity="0.5" transform="translate(3.6 1.6)"><line x1="187.6" y1="281.2" x2="124.6" y2="397.2" stroke="#3a4656" stroke-width="2.3"/><path d="M119.8 406 L120.4 393.6 L130.0 399.4 Z" fill="#3a4656"/></g>
<line x1="187.6" y1="281.2" x2="124.6" y2="397.2" stroke="#cb0d12" stroke-width="2.3"/><path d="M119.8 406 L120.4 393.6 L130.0 399.4 Z" fill="#cb0d12"/>
</svg>
</body>
</html>
